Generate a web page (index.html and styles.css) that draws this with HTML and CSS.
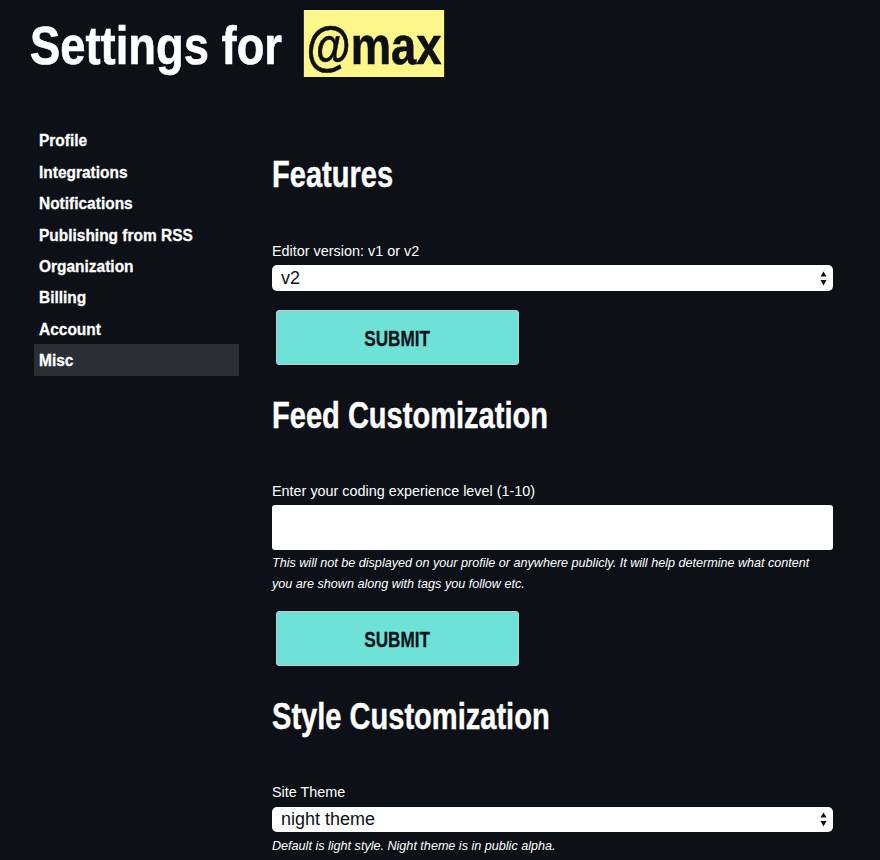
FILE: index.html
```html
<!DOCTYPE html>
<html>
<head>
<meta charset="utf-8">
<link rel="stylesheet" href="styles.css">
</head>
<body>
<h1 class="title">Settings for <span class="handle">@max</span></h1>
<div class="layout">
  <nav class="sidebar">
    <a class="nav-item"><span class="nav-text">Profile</span></a>
    <a class="nav-item"><span class="nav-text">Integrations</span></a>
    <a class="nav-item"><span class="nav-text">Notifications</span></a>
    <a class="nav-item"><span class="nav-text">Publishing from RSS</span></a>
    <a class="nav-item"><span class="nav-text">Organization</span></a>
    <a class="nav-item"><span class="nav-text">Billing</span></a>
    <a class="nav-item"><span class="nav-text">Account</span></a>
    <a class="nav-item active"><span class="nav-text">Misc</span></a>
  </nav>
  <main class="main">
    <section class="section first">
      <h2 class="heading">Features</h2>
      <label class="label">Editor version: v1 or v2</label>
      <div class="select">
        <span>v2</span>
        <svg class="arrows" width="7" height="15" viewBox="0 0 7 15"><path d="M3.5 0.5 L6.5 5.5 L0.5 5.5 Z M3.5 14.5 L6.5 9 L0.5 9 Z" fill="#111"/></svg>
      </div>
      <button class="submit"><span class="submit-text">SUBMIT</span></button>
    </section>
    <section class="section">
      <h2 class="heading">Feed Customization</h2>
      <label class="label">Enter your coding experience level (1-10)</label>
      <div class="input"></div>
      <p class="help">This will not be displayed on your profile or anywhere publicly. It will help determine what content you are shown along with tags you follow etc.</p>
      <button class="submit second"><span class="submit-text">SUBMIT</span></button>
    </section>
    <section class="section">
      <h2 class="heading">Style Customization</h2>
      <label class="label">Site Theme</label>
      <div class="select theme">
        <span>night theme</span>
        <svg class="arrows" width="7" height="15" viewBox="0 0 7 15"><path d="M3.5 0.5 L6.5 5.5 L0.5 5.5 Z M3.5 14.5 L6.5 9 L0.5 9 Z" fill="#111"/></svg>
      </div>
      <p class="help">Default is light style. Night theme is in public alpha.</p>
    </section>
  </main>
</div>
</body>
</html>
```
FILE: styles.css
```css
html, body {
  margin: 0;
  padding: 0;
  background: #0d1117;
  color: #ffffff;
  height: 860px;
  overflow: hidden;
}
body {
  font-family: "Liberation Sans", Arial, sans-serif;
}
.title {
  margin: 10px 0 0 29.7px;
  height: 66.7px;
  font-size: 54px;
  line-height: 40px;
  font-weight: 700;
  -webkit-text-stroke: 0.6px currentColor;
  transform: scaleX(0.84);
  transform-origin: left top;
  white-space: nowrap;
}
.handle {
  display: inline-block;
  margin-left: 10.7px;
  padding: 4px 3.5px 0;
  line-height: 62.7px;
  background: #fcf68b;
  color: #0d1117;
}
.layout {
  display: flex;
  margin-top: 47.7px;
}
.sidebar {
  margin-left: 34.3px;
  width: 204.4px;
  display: flex;
  flex-direction: column;
}
.nav-item {
  display: block;
  padding: 2px 5px 0;
  height: 29.4px;
  font-size: 17px;
  line-height: 29.4px;
  font-weight: 700;
  -webkit-text-stroke: 0.3px currentColor;
  color: #fff;
  white-space: nowrap;
}
.nav-text {
  display: inline-block;
  transform: scaleX(0.91);
  transform-origin: left center;
}
.nav-item.active {
  background-color: #2b2f35;
  background-image: repeating-conic-gradient(#30343a 0 25%, #262a30 0 50%);
  background-size: 2px 2px;
}
.main {
  margin-left: 33.3px;
  width: 561px;
  padding-top: 31px;
}
.section {
  margin: 0;
}
.heading {
  margin: 31px 0 0;
  font-size: 36px;
  line-height: 40px;
  font-weight: 700;
  -webkit-text-stroke: 0.4px currentColor;
  transform: scaleX(0.807);
  transform-origin: left center;
  white-space: nowrap;
}
.section.first .heading {
  margin-top: 0;
}
.label {
  display: block;
  margin-top: 44.3px;
  font-size: 14.4px;
  line-height: 20px;
}
.section.first .label {
  margin-top: 46px;
}
.select {
  margin-top: 4px;
  height: 25.4px;
  background: #fff;
  border-radius: 5px;
  color: #0d1117;
  display: flex;
  align-items: center;
  justify-content: space-between;
  padding: 0 6px 0 9px;
  font-size: 18px;
  box-sizing: border-box;
}
.select.theme {
  margin-top: 5.3px;
}
.arrows {
  display: block;
}
.submit {
  display: flex;
  align-items: center;
  justify-content: center;
  margin: 19.5px 0 0 4px;
  padding: 0;
  width: 242.7px;
  height: 55px;
  background: #6ee2d6;
  border: 1px solid #c9cccf;
  border-radius: 3px;
  color: #11151b;
  font-family: "Liberation Sans", Arial, sans-serif;
  font-size: 22px;
  font-weight: 700;
  -webkit-text-stroke: 0.3px currentColor;
  box-sizing: border-box;
}
.submit.second {
  margin-top: 15.9px;
}
.submit-text {
  display: inline-block;
  transform: scaleX(0.78);
  transform-origin: center;
  padding-top: 2px;
}
.input {
  margin-top: 4px;
  height: 45px;
  background: #fff;
  border-radius: 3px;
}
.help {
  margin: 3.8px 0 0;
  font-size: 12.6px;
  line-height: 21px;
  font-style: italic;
}
```
